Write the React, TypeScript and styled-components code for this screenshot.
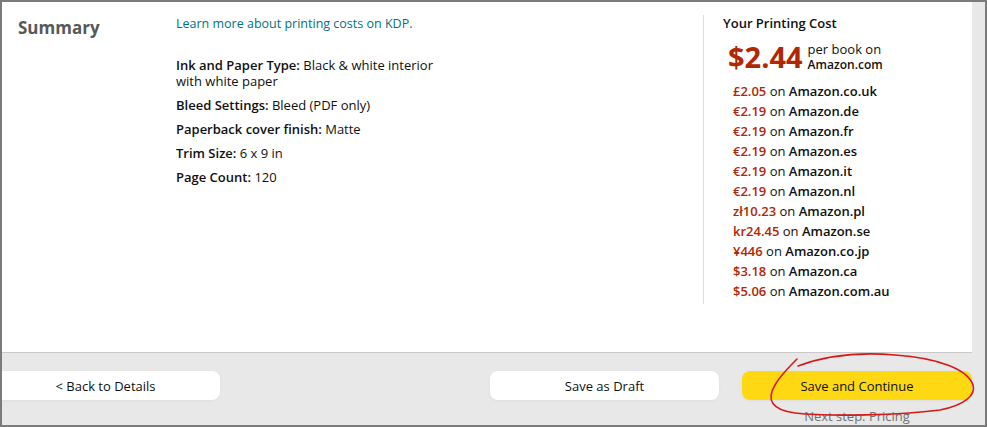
import React from "react";
import styled, { createGlobalStyle } from "styled-components";

const Global = createGlobalStyle`
  html, body { margin: 0; padding: 0; background: #fff; }
  body { font-family: "Open Sans", "Noto Sans", Arial, sans-serif; color: #0f1111; }
  * { box-sizing: border-box; }
`;

const Frame = styled.div`
  position: relative;
  width: 987px;
  height: 427px;
  border: 2px solid #7b7b7b;
  background: #e8e8e8;
  overflow: hidden;
  display: flex;
  flex-direction: column;
`;

const Panel = styled.section`
  height: 351px;
  margin-right: 13px;
  background: #fff;
  border-bottom: 1px solid #c9c9c9;
  display: flex;
  padding-top: 14px;
`;

const Heading = styled.h2`
  margin: 0;
  width: 174px;
  padding: 2px 0 0 16px;
  font-size: 17px;
  line-height: 20px;
  font-weight: 700;
  color: #565959;
`;

const Details = styled.div`
  width: 527px;
  display: flex;
  flex-direction: column;
`;

const Link = styled.a`
  font-size: 12.5px;
  line-height: 16px;
  color: #007185;
  text-decoration: none;
  margin-bottom: 25px;
`;

const Spec = styled.p`
  margin: 0 0 8px;
  width: 262px;
  font-size: 13px;
  line-height: 16px;
  color: #0f1111;
  b { font-weight: 600; }
`;

const CostColumn = styled.aside`
  width: 269px;
  align-self: flex-start;
  border-left: 1px solid #dddddd;
  padding: 0 0 3px 19px;
  margin-top: -1px;
  display: flex;
  flex-direction: column;
`;

const CostTitle = styled.div`
  font-size: 13px;
  line-height: 16px;
  font-weight: 600;
  color: #0f1111;
`;

const MainCost = styled.div`
  display: flex;
  align-items: center;
  gap: 5px;
  margin: 9px 0 7px 5px;
`;

const BigPrice = styled.span`
  font-size: 29px;
  line-height: 34px;
  font-weight: 700;
  color: #b12704;
`;

const PerBook = styled.div`
  font-size: 13px;
  line-height: 16px;
  color: #0f1111;
  display: flex;
  flex-direction: column;
  b { font-weight: 600; font-size: 12px; }
`;

const MarketList = styled.ul`
  list-style: none;
  margin: 0;
  padding: 0 0 0 10px;
`;

const Market = styled.li`
  font-size: 13px;
  line-height: 20px;
  color: #0f1111;
`;

const Price = styled.span`
  color: #b12704;
  font-weight: 600;
`;

const Site = styled.b`
  font-weight: 600;
`;

const Footer = styled.footer`
  flex: 1;
  display: flex;
  justify-content: space-between;
  align-items: flex-start;
  padding: 18px 13px 0 0;
`;

const Button = styled.button<{ $primary?: boolean }>`
  width: ${(p) => (p.$primary ? 230 : 229)}px;
  height: 29px;
  border: none;
  border-radius: 8px;
  background: ${(p) => (p.$primary ? "#ffd814" : "#ffffff")};
  box-shadow: 0 1px 2px rgba(213, 217, 217, 0.5);
  font-family: inherit;
  font-size: 13px;
  color: #0f1111;
  padding: 0;
  cursor: pointer;
`;

const BackButton = styled(Button)`
  margin-left: -11px;
`;

const RightGroup = styled.div`
  display: flex;
  gap: 23px;
  align-items: flex-start;
`;

const ContinueBox = styled.div`
  display: flex;
  flex-direction: column;
  align-items: center;
`;

const NextStep = styled.span`
  margin-top: 8px;
  font-size: 13px;
  line-height: 16px;
  color: #6f7373;
`;

const Annotation = styled.svg`
  position: absolute;
  left: -2px;
  top: -2px;
  pointer-events: none;
`;

const markets: [string, string][] = [
  ["£2.05", "Amazon.co.uk"],
  ["€2.19", "Amazon.de"],
  ["€2.19", "Amazon.fr"],
  ["€2.19", "Amazon.es"],
  ["€2.19", "Amazon.it"],
  ["€2.19", "Amazon.nl"],
  ["zł10.23", "Amazon.pl"],
  ["kr24.45", "Amazon.se"],
  ["¥446", "Amazon.co.jp"],
  ["$3.18", "Amazon.ca"],
  ["$5.06", "Amazon.com.au"],
];

export default function App() {
  return (
    <>
      <Global />
      <Frame>
        <Panel>
          <Heading>Summary</Heading>
          <Details>
            <Link href="#">Learn more about printing costs on KDP.</Link>
            <Spec>
              <b>Ink and Paper Type:</b> Black &amp; white interior with white paper
            </Spec>
            <Spec>
              <b>Bleed Settings:</b> Bleed (PDF only)
            </Spec>
            <Spec>
              <b>Paperback cover finish:</b> Matte
            </Spec>
            <Spec>
              <b>Trim Size:</b> 6 x 9 in
            </Spec>
            <Spec>
              <b>Page Count:</b> 120
            </Spec>
          </Details>
          <CostColumn>
            <CostTitle>Your Printing Cost</CostTitle>
            <MainCost>
              <BigPrice>$2.44</BigPrice>
              <PerBook>
                <span>per book on</span>
                <b>Amazon.com</b>
              </PerBook>
            </MainCost>
            <MarketList>
              {markets.map(([price, site]) => (
                <Market key={site}>
                  <Price>{price}</Price> on <Site>{site}</Site>
                </Market>
              ))}
            </MarketList>
          </CostColumn>
        </Panel>
        <Footer>
          <BackButton>&lt; Back to Details</BackButton>
          <RightGroup>
            <Button>Save as Draft</Button>
            <ContinueBox>
              <Button $primary>Save and Continue</Button>
              <NextStep>Next step: Pricing</NextStep>
            </ContinueBox>
          </RightGroup>
        </Footer>
        <Annotation width="987" height="427" viewBox="0 0 987 427">
          <path
            d="M 797 359 C 790 366, 780 376, 775 385 C 766 400, 772 410, 795 413 C 830 417, 900 415, 940 410 C 965 405, 976 395, 973 385 C 968 370, 940 358, 895 355 C 860 352, 825 356, 798 366"
            fill="none"
            stroke="#d61a1a"
            strokeWidth="1.6"
            strokeLinecap="round"
          />
        </Annotation>
      </Frame>
    </>
  );
}
